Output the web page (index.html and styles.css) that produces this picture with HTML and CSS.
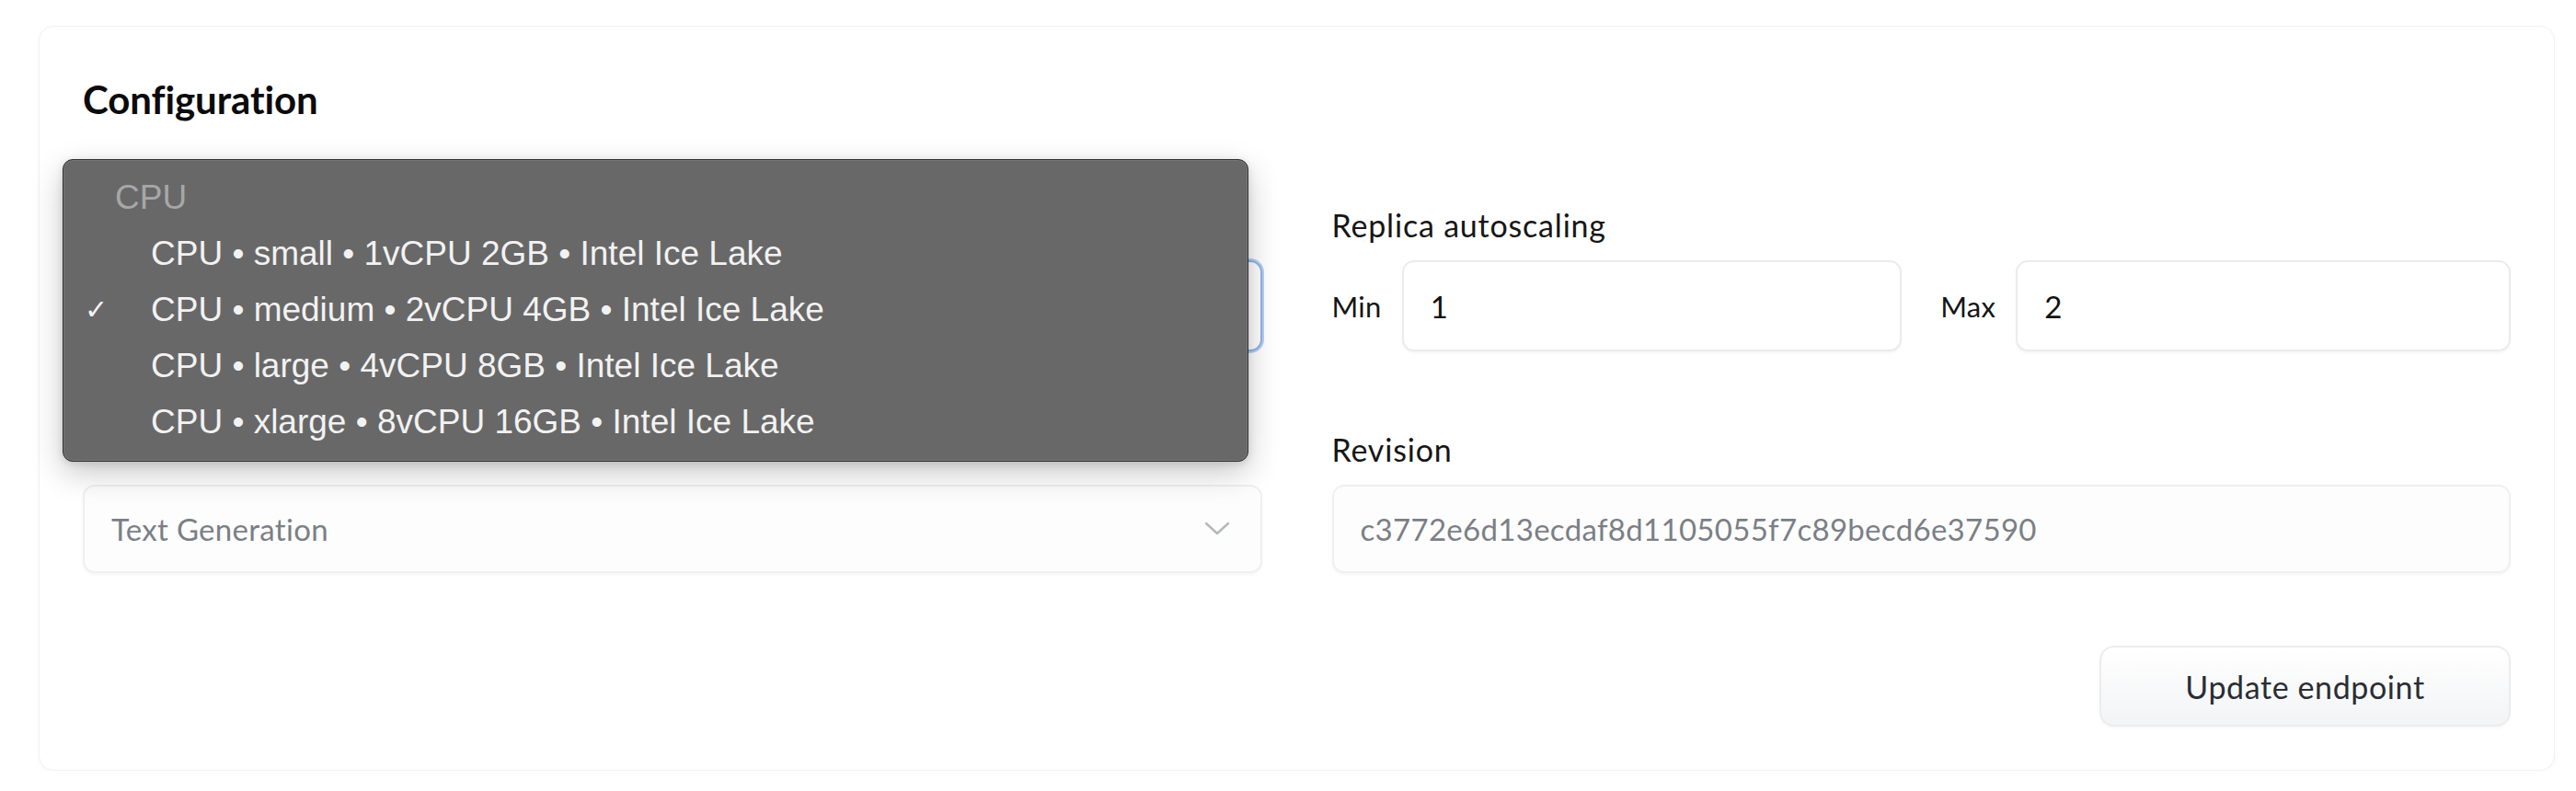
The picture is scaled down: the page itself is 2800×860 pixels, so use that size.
FILE: index.html
```html
<!DOCTYPE html>
<html lang="en">
<head>
<meta charset="utf-8">
<title>Configuration</title>
<link rel="stylesheet" href="styles.css">
</head>
<body>
<div class="page">
  <section class="card">
    <h2 class="title">Configuration</h2>
    <div class="grid">
      <div class="field">
        <div class="label label-hidden"></div>
        <div class="select-wrap">
          <div class="select focused">
            <span class="select-value"></span>
            <svg class="chev" viewBox="0 0 28 16" width="28" height="16"><path d="M2 2 L14 13 L26 2" fill="none" stroke="#9ca3af" stroke-width="2.6" stroke-linecap="round" stroke-linejoin="round"/></svg>
          </div>
          <div class="menu">
            <div class="menu-group">CPU</div>
            <div class="menu-item"><span class="check"></span>CPU • small • 1vCPU 2GB • Intel Ice Lake</div>
            <div class="menu-item"><span class="check">✓</span>CPU • medium • 2vCPU 4GB • Intel Ice Lake</div>
            <div class="menu-item"><span class="check"></span>CPU • large • 4vCPU 8GB • Intel Ice Lake</div>
            <div class="menu-item"><span class="check"></span>CPU • xlarge • 8vCPU 16GB • Intel Ice Lake</div>
          </div>
        </div>
      </div>
      <div class="field">
        <label class="label">Replica autoscaling</label>
        <div class="minmax">
          <div class="mm"><span class="mm-label">Min</span><div class="input"><span class="input-value">1</span></div></div>
          <div class="mm"><span class="mm-label">Max</span><div class="input"><span class="input-value">2</span></div></div>
        </div>
      </div>
      <div class="field row2">
        <div class="label label-hidden"></div>
        <div class="select disabled short">
          <span class="select-value muted">Text Generation</span>
          <svg class="chev" viewBox="0 0 28 16" width="28" height="16"><path d="M2 2 L14 13 L26 2" fill="none" stroke="#b4b8be" stroke-width="2.4" stroke-linecap="round" stroke-linejoin="round"/></svg>
        </div>
      </div>
      <div class="field row2">
        <label class="label">Revision</label>
        <div class="input disabled short">
          <span class="input-value muted">c3772e6d13ecdaf8d1105055f7c89becd6e37590</span>
        </div>
      </div>
    </div>
    <div class="actions">
      <button class="btn" type="button">Update endpoint</button>
    </div>
  </section>
</div>
</body>
</html>
```

FILE: styles.css
```css
* { box-sizing: border-box; }
html, body { margin: 0; padding: 0; background: #ffffff; }
body { font-family: Lato, "Open Sans", sans-serif; color: #111827; }

.page { padding: 28px 23px 0 42px; }

.card {
  border: 1px solid #f1f1f2;
  border-radius: 16px;
  background: #fff;
  box-shadow: 0 2px 6px rgba(0,0,0,0.025);
  padding: 53px 47px 47px 47px;
  height: 810px;
}

.title {
  margin: 0;
  font-size: 42px;
  line-height: 52px;
  font-weight: 700;
  color: #0b0b0b;
  letter-spacing: -0.1px;
}

.grid {
  margin-top: 91px;
  display: grid;
  grid-template-columns: 1fr 1fr;
  column-gap: 76px;
  row-gap: 87px;
}

.field { display: flex; flex-direction: column; }

.label {
  font-size: 34px;
  letter-spacing: 0.8px;
  line-height: 40px;
  height: 40px;
  margin-bottom: 18px;
  color: #161616;
}

.select-wrap { position: relative; }

.select, .input {
  height: 99px;
  border: 2px solid #ebebec;
  border-radius: 13px;
  background: #fff;
  box-shadow: 0 2px 3px rgba(0,0,0,0.04);
  display: flex;
  align-items: center;
  padding: 0 31px 0 29px;
  font-size: 33px;
  letter-spacing: 0.3px;
}
.short { height: 96px; }

.select { justify-content: space-between; }
.select.focused {
  border-color: #8fb4ea;
  box-shadow: 0 0 0 2px #b9d0f3;
}
.disabled {
  background: #fdfdfd;
  border-color: #f0f0f1;
}

.select-value, .input-value { color: #111; }
.muted { color: #7b7f86; }

.chev { display: block; margin-right: 2px; }

.minmax {
  display: grid;
  grid-template-columns: 1fr 1fr;
  column-gap: 42px;
}
.mm { display: flex; align-items: center; }
.mm-label {
  font-size: 31px;
  letter-spacing: 0.3px;
  color: #161616;
  margin-right: 22px;
}
.mm .input { flex: 1; }

.actions {
  margin-top: 79px;
  display: flex;
  justify-content: flex-end;
}
.btn {
  width: 447px;
  height: 88px;
  border: 2px solid #ececee;
  border-radius: 16px;
  background: linear-gradient(#ffffff, #f3f4f6);
  font-family: Lato, "Open Sans", sans-serif;
  font-size: 34px;
  letter-spacing: 0.6px;
  color: #2a2d34;
  box-shadow: 0 2px 3px rgba(0,0,0,0.03);
}

.menu {
  position: absolute;
  left: -22px;
  top: -110px;
  width: 1289px;
  height: 329px;
  background: #686868;
  border: 1px solid #2c2c2c;
  border-radius: 11px;
  box-shadow: inset 0 0 0 1px rgba(255,255,255,0.12), 0 12px 34px rgba(0,0,0,0.22), 0 2px 8px rgba(0,0,0,0.12);
  padding: 10px 0 0 0;
  font-family: "Liberation Sans", Arial, sans-serif;
  font-size: 37px;
  line-height: 61px;
  color: #f2f2f2;
  z-index: 5;
}
.menu-group {
  padding-left: 56px;
  color: #a7a7a7;
}
.menu-item {
  display: flex;
  padding-left: 23px;
}
.check {
  width: 72px;
  font-size: 30px;
  color: #f2f2f2;
}
```
